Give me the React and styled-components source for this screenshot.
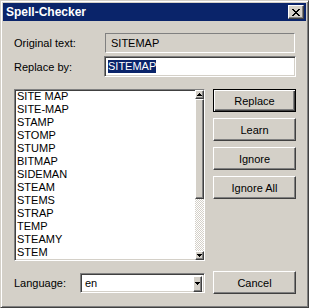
import React from "react";
import styled, { createGlobalStyle, css } from "styled-components";

const GlobalStyle = createGlobalStyle`
  html, body {
    margin: 0;
    padding: 0;
    background: #d4d0c8;
  }
  body {
    font-family: "Liberation Sans", Arial, sans-serif;
    font-size: 11px;
    color: #000;
  }
`;

const raised = css`
  border: 1px solid;
  border-color: #fff #404040 #404040 #fff;
  box-shadow: inset -1px -1px #808080, inset 1px 1px #d4d0c8;
  background: #d4d0c8;
  box-sizing: border-box;
`;

const sunken = css`
  border: 1px solid;
  border-color: #808080 #fff #fff #808080;
  box-shadow: inset 1px 1px #404040, inset -1px -1px #d4d0c8;
  box-sizing: border-box;
`;

const Window = styled.div`
  width: 309px;
  height: 308px;
  box-sizing: border-box;
  border: 1px solid;
  border-color: #d4d0c8 #404040 #404040 #d4d0c8;
  box-shadow: inset 1px 1px #fff, inset -1px -1px #808080;
  padding: 2px;
  background: #d4d0c8;
  display: flex;
  flex-direction: column;
`;

const TitleBar = styled.div`
  height: 18px;
  flex: none;
  background: #0a246a;
  display: flex;
  align-items: center;
  justify-content: space-between;
  padding: 0 2px 0 2px;
  color: #fff;
  font-weight: bold;
  font-size: 12px;
`;

const CloseButton = styled.div`
  ${raised};
  width: 16px;
  height: 14px;
  display: flex;
  align-items: center;
  justify-content: center;
`;

const Body = styled.div`
  flex: 1;
  padding: 12px 10px 0 11px;
  display: flex;
  flex-direction: column;
`;

const FieldGrid = styled.div`
  display: grid;
  grid-template-columns: 90px 1fr;
  row-gap: 3px;
  align-items: center;
`;

const Label = styled.label`
  white-space: nowrap;
`;

const StaticField = styled.div`
  height: 20px;
  box-sizing: border-box;
  border: 1px solid;
  border-color: #808080 #fff #fff #808080;
  padding-left: 5px;
  display: flex;
  align-items: center;
  margin-left: 1px;
  margin-right: 1px;
`;

const EditField = styled.div`
  ${sunken};
  height: 21px;
  background: #fff;
  padding-left: 3px;
  display: flex;
  align-items: center;
`;

const Selected = styled.span`
  background: #0a246a;
  color: #fff;
  line-height: 13px;
`;

const Main = styled.div`
  display: flex;
  gap: 8px;
  margin-top: 12px;
`;

const ListBox = styled.div`
  ${sunken};
  width: 191px;
  height: 172px;
  background: #fff;
  display: flex;
`;

const Items = styled.div`
  flex: 1;
  padding-left: 2px;
  overflow: hidden;
`;

const Item = styled.div`
  height: 13px;
  line-height: 13px;
  white-space: nowrap;
`;

const ScrollBar = styled.div`
  width: 9px;
  display: flex;
  flex-direction: column;
`;

const ArrowButton = styled.div`
  ${raised};
  height: ${(p) => p.$h || 9}px;
  display: flex;
  align-items: center;
  justify-content: center;
  flex: none;
`;

const Thumb = styled.div`
  ${raised};
  height: 100px;
  flex: none;
`;

const Track = styled.div`
  flex: 1;
  background: repeating-conic-gradient(#fff 0 25%, #d4d0c8 0 50%) 0 0 / 2px 2px;
`;

const ButtonColumn = styled.div`
  width: 83px;
  display: flex;
  flex-direction: column;
  gap: 6px;
`;

const Button = styled.div`
  ${raised};
  height: 23px;
  display: flex;
  align-items: center;
  justify-content: center;
  ${(p) =>
    p.$default &&
    css`
      border-color: #000;
      box-shadow: inset 1px 1px #fff, inset -1px -1px #404040,
        inset -2px -2px #808080;
    `}
`;

const Bottom = styled.div`
  display: flex;
  align-items: center;
  gap: 8px;
  margin-top: 10px;
`;

const LangGroup = styled.div`
  width: 191px;
  display: flex;
  align-items: center;
`;

const LangLabel = styled.label`
  width: 66px;
  flex: none;
`;

const Combo = styled.div`
  ${sunken};
  flex: 1;
  height: 20px;
  background: #fff;
  display: flex;
  align-items: stretch;
  padding: 2px 2px 2px 4px;
`;

const ComboText = styled.div`
  flex: 1;
  display: flex;
  align-items: center;
`;

const CloseGlyph = () => (
  <svg width="8" height="7" viewBox="0 0 8 7" shapeRendering="crispEdges">
    <path
      d="M0 0h2v1h-2zM6 0h2v1h-2zM1 1h2v1h-2zM5 1h2v1h-2zM2 2h4v1h-4zM3 3h2v1h-2zM2 4h4v1h-4zM1 5h2v1h-2zM5 5h2v1h-2zM0 6h2v1h-2zM6 6h2v1h-2z"
      fill="#000"
    />
  </svg>
);

const Arrow = ({ down }) => (
  <svg width="5" height="3" viewBox="0 0 5 3" shapeRendering="crispEdges">
    <path d={down ? "M0 0h5v1h-5zM1 1h3v1h-3zM2 2h1v1h-1z" : "M2 0h1v1h-1zM1 1h3v1h-3zM0 2h5v1h-5z"} fill="#000" />
  </svg>
);

const suggestions = [
  "SITE MAP",
  "SITE-MAP",
  "STAMP",
  "STOMP",
  "STUMP",
  "BITMAP",
  "SIDEMAN",
  "STEAM",
  "STEMS",
  "STRAP",
  "TEMP",
  "STEAMY",
  "STEM",
];

export default function App() {
  return (
    <>
      <GlobalStyle />
      <Window>
        <TitleBar>
          <span style={{ paddingLeft: 1 }}>Spell-Checker</span>
          <CloseButton>
            <CloseGlyph />
          </CloseButton>
        </TitleBar>
        <Body>
          <FieldGrid>
            <Label>Original text:</Label>
            <StaticField>SITEMAP</StaticField>
            <Label>Replace by:</Label>
            <EditField>
              <Selected>SITEMAP</Selected>
            </EditField>
          </FieldGrid>
          <Main>
            <ListBox>
              <Items>
                {suggestions.map((s) => (
                  <Item key={s}>{s}</Item>
                ))}
              </Items>
              <ScrollBar>
                <ArrowButton>
                  <Arrow />
                </ArrowButton>
                <Thumb />
                <Track />
                <ArrowButton>
                  <Arrow down />
                </ArrowButton>
              </ScrollBar>
            </ListBox>
            <ButtonColumn>
              <Button $default>Replace</Button>
              <Button>Learn</Button>
              <Button>Ignore</Button>
              <Button>Ignore All</Button>
            </ButtonColumn>
          </Main>
          <Bottom>
            <LangGroup>
              <LangLabel>Language:</LangLabel>
              <Combo>
                <ComboText>en</ComboText>
                <ScrollBar>
                  <ArrowButton $h={16}>
                    <Arrow down />
                  </ArrowButton>
                </ScrollBar>
              </Combo>
            </LangGroup>
            <ButtonColumn>
              <Button>Cancel</Button>
            </ButtonColumn>
          </Bottom>
        </Body>
      </Window>
    </>
  );
}
